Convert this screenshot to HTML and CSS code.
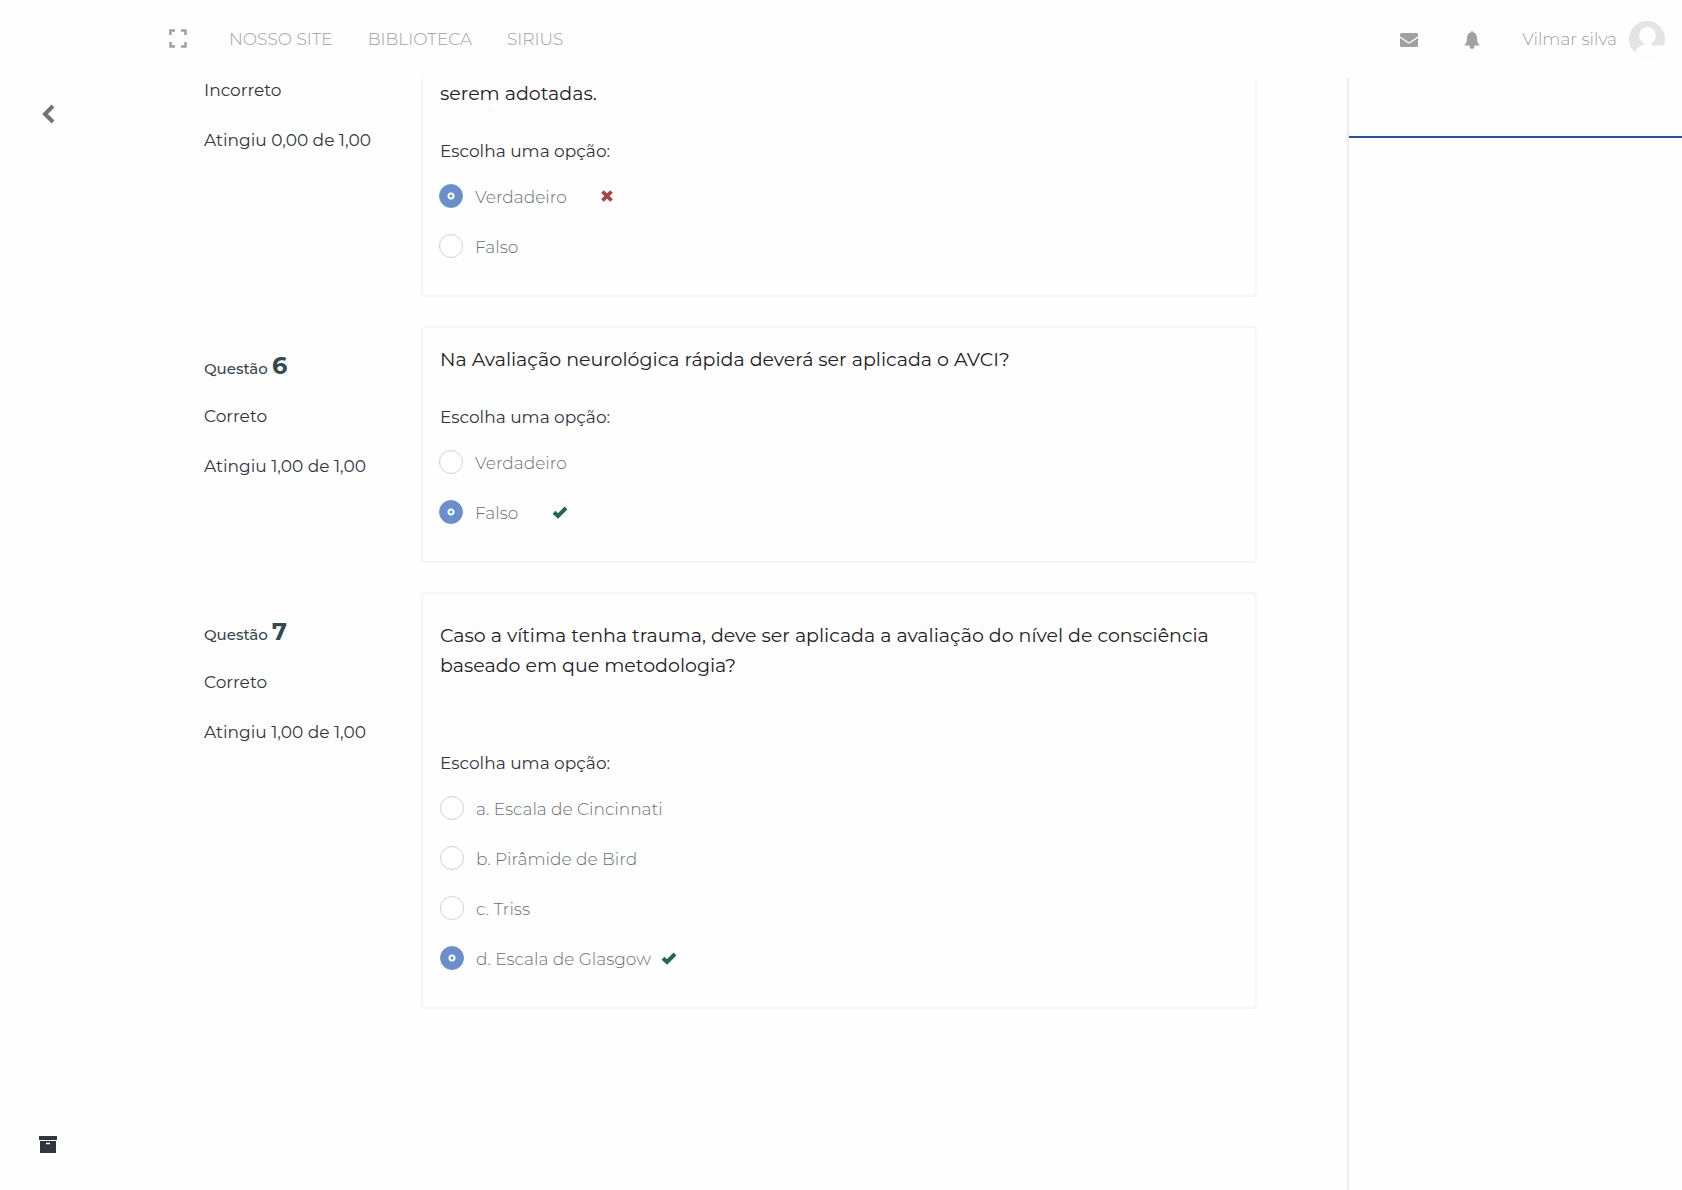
FILE: index.html
```
<!DOCTYPE html>
<html lang="pt-BR">
<head>
<meta charset="utf-8">
<meta name="viewport" content="width=device-width, initial-scale=1">
<title>Revisão do questionário</title>
<link rel="stylesheet" href="styles.css">
</head>
<body>
<svg class="sprite" aria-hidden="true">
  <symbol id="check" viewBox="0 0 16 14"><path d="M2 7.200 6 11 14 3" fill="none" stroke="currentColor" stroke-width="4"/></symbol>
  <symbol id="cross" viewBox="0 0 12 12"><path d="M1.500 1.500 10.500 10.500M10.500 1.500 1.500 10.500" fill="none" stroke="currentColor" stroke-width="3.800"/></symbol>
</svg>
<header class="topbar">
  <button class="icon-button" type="button" aria-label="Tela cheia">
    <svg width="18" height="20" viewBox="0 0 18 20"><path d="M1.500 6V1.500H6M12 1.500h4.500V6M1.500 13v4.500H6M12 17.500h4.500V13" fill="none" stroke="currentColor" stroke-width="2.500"/></svg>
  </button>
  <nav class="menu">
    <a href="#">NOSSO SITE</a>
    <a href="#">BIBLIOTECA</a>
    <a href="#">SIRIUS</a>
  </nav>
  <div class="user-tools">
    <div class="alerts">
      <button class="icon-button" type="button" aria-label="Mensagens">
        <svg width="18" height="14" viewBox="0 0 18 14"><rect width="18" height="14" rx="1.500" fill="currentColor"/><path d="M0 4 7.500 9.300q1.500.9 3 0L18 4" fill="none" stroke="#fff" stroke-width="1.300"/></svg>
      </button>
      <button class="icon-button" type="button" aria-label="Notificações">
        <svg width="16" height="18" viewBox="0 0 16 18"><path d="M8 0q1 0 1 1.300C12 2 13 4.500 13 7c0 4 1 6 3 7.500H0C2 13 3 11 3 7c0-2.500 1-5 4-5.700Q7 0 8 0ZM5.500 14.500h5Q10 18 8 18T5.500 14.500Z" fill="currentColor"/></svg>
      </button>
    </div>
    <a class="profile" href="#">Vilmar silva
      <svg width="36" height="36" viewBox="0 0 36 36"><clipPath id="disc"><circle cx="18" cy="18" r="18"/></clipPath><g clip-path="url(#disc)"><path fill="#e4e4e4" d="M0 0h36v36H0z"/><circle cx="18.500" cy="14.500" r="8.500" fill="#fefefe"/><path d="M5 36 6 31q3-6 8-7l2-3h5l2 3q3 1 6 .5l7-.5v12Z" fill="#fefefe"/></g></svg>
    </a>
  </div>
</header>
<div class="shell">
  <div class="rail">
    <button class="icon-button back" type="button" aria-label="Voltar">
      <svg width="14" height="20" viewBox="0 0 14 20"><path d="M12 2 4 10l8 8" fill="none" stroke="currentColor" stroke-width="4"/></svg>
    </button>
    <button class="icon-button archive" type="button" aria-label="Arquivo">
      <svg width="18" height="17" viewBox="0 0 18 17"><path d="M0 0h18v4H0zM1 5h16v12H1z" fill="currentColor"/><path d="M7 7.500h4" stroke="#fff" stroke-width="1.500"/></svg>
    </button>
  </div>
  <main class="quiz">
    <section class="question continued">
      <div class="info">
        <p>Incorreto</p>
        <p>Atingiu 0,00 de 1,00</p>
      </div>
      <div class="card">
        <p class="prompt">serem adotadas.</p>
        <fieldset class="options spaced">
          <legend>Escolha uma opção:</legend>
          <div class="option"><input type="radio" id="q5v" name="q5" checked><label for="q5v">Verdadeiro</label><svg class="wrong" width="12" height="12"><use href="#cross"/></svg></div>
          <div class="option"><input type="radio" id="q5f" name="q5"><label for="q5f">Falso</label></div>
        </fieldset>
      </div>
    </section>
    <section class="question">
      <div class="info">
        <h2>Questão <strong>6</strong></h2>
        <p>Correto</p>
        <p>Atingiu 1,00 de 1,00</p>
      </div>
      <div class="card">
        <p class="prompt">Na Avaliação neurológica rápida deverá ser aplicada o AVCI?</p>
        <fieldset class="options spaced">
          <legend>Escolha uma opção:</legend>
          <div class="option"><input type="radio" id="q6v" name="q6"><label for="q6v">Verdadeiro</label></div>
          <div class="option"><input type="radio" id="q6f" name="q6" checked><label for="q6f">Falso</label><svg class="right" width="16" height="14"><use href="#check"/></svg></div>
        </fieldset>
      </div>
    </section>
    <section class="question long">
      <div class="info">
        <h2>Questão <strong>7</strong></h2>
        <p>Correto</p>
        <p>Atingiu 1,00 de 1,00</p>
      </div>
      <div class="card">
        <p class="prompt">Caso a vítima tenha trauma, deve ser aplicada a avaliação do nível de consciência baseado em que metodologia?</p>
        <fieldset class="options">
          <legend>Escolha uma opção:</legend>
          <div class="option"><input type="radio" id="q7a" name="q7"><label for="q7a">a. Escala de Cincinnati</label></div>
          <div class="option"><input type="radio" id="q7b" name="q7"><label for="q7b">b. Pirâmide de Bird</label></div>
          <div class="option"><input type="radio" id="q7c" name="q7"><label for="q7c">c. Triss</label></div>
          <div class="option"><input type="radio" id="q7d" name="q7" checked><label for="q7d">d. Escala de Glasgow</label><svg class="right" width="16" height="14"><use href="#check"/></svg></div>
        </fieldset>
      </div>
    </section>
  </main>
  <aside class="side"><div class="side-head"></div></aside>
</div>
</body>
</html>
```
FILE: styles.css
```
* { box-sizing: border-box; }

body {
  margin: 0;
  min-height: 100vh;
  display: flex;
  flex-direction: column;
  background: #fefefe;
  color: #30363c;
  font: 17px/20px Montserrat, Inter, sans-serif;
}

p, h2 { margin: 0; }
a { color: inherit; text-decoration: none; }
svg { display: block; flex: none; }
.sprite { display: none; }

.icon-button {
  padding: 0;
  border: 0;
  background: none;
  color: inherit;
  cursor: pointer;
}

.topbar {
  height: 78px;
  display: flex;
  align-items: center;
  padding: 0 17px 0 169px;
  color: #a0a0a0;
  font-weight: 300;
}
.menu { display: flex; gap: 35px; margin-left: 42px; }
.user-tools { display: flex; align-items: center; gap: 42px; margin-left: auto; }
.alerts { display: flex; align-items: center; gap: 46px; padding-top: 2px; }
.profile { display: flex; align-items: center; gap: 12px; }

.shell { flex: 1; display: flex; }

.rail {
  width: 96px;
  display: flex;
  flex-direction: column;
  align-items: center;
  justify-content: space-between;
  padding: 26px 0 37px;
}
.back { color: #6c757d; }

.quiz {
  flex: 1;
  display: flex;
  flex-direction: column;
  gap: 29px;
  padding: 0 90px 60px 108px;
}

.question { display: grid; grid-template-columns: 217px 1fr; }

.info {
  display: flex;
  flex-direction: column;
  gap: 30px;
  padding-top: 30px;
}
.continued .info { padding-top: 2px; }
.info h2 { height: 20px; font-size: 15px; font-weight: 500; color: #37474f; line-height: 20px; }
.info strong { font-size: 24px; font-weight: 700; line-height: 20px; }

.card {
  padding: 17px 17px 37px;
  border: 2px solid #f5f5f5;
  border-radius: 4px;
}
.continued .card { padding-top: 1px; border-top: 0; border-radius: 0 0 4px 4px; }
.long .card { padding-top: 27px; }

.prompt { font-size: 19px; line-height: 30px; color: #212121; margin-bottom: 30px; }
.long .prompt { margin-bottom: 70px; }

.options { margin: 0; padding: 0; border: 0; min-width: 0; }
.options legend { padding: 0; line-height: 24px; margin-bottom: 21px; }

.option { display: flex; align-items: center; gap: 12px; height: 24px; color: #6c7075; font-weight: 300; }
.option + .option { margin-top: 26px; }
.option label { padding-top: 2px; }
.option svg { margin-left: -2px; }
.spaced .option { margin-left: -1px; }
.spaced .option svg { margin-left: 22px; }
.right { color: #22694b; }
.wrong { color: #aa4143; }

.option input {
  appearance: none;
  width: 24px;
  height: 24px;
  margin: 0;
  border: 1px solid #d2d2d2;
  border-radius: 50%;
  background: #fff;
}
.option input:checked {
  border-color: #6b8fcb;
  background: radial-gradient(circle, #6b8fcb 1px, #fff 2px, #fff 3px, #6b8fcb 4px);
}

.side { width: 335px; border-left: 2px solid #ebebed; }
.side-head { height: 60px; border-bottom: 2px solid #1e53b0; }
```
